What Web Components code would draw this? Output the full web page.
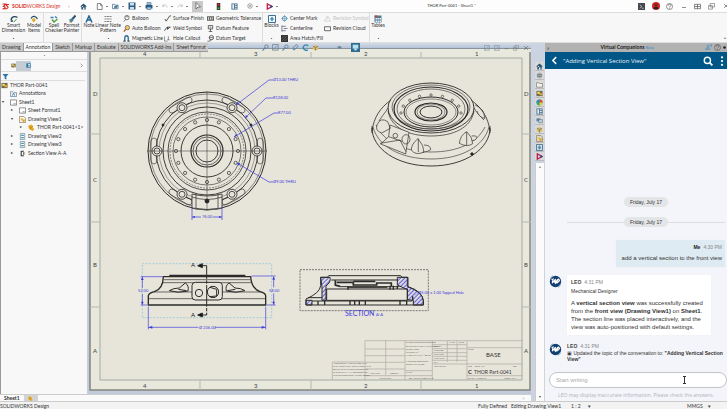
<!DOCTYPE html>
<html lang="en">
<head>
<meta charset="utf-8">
<title>THOR Part-0041 - Sheet1</title>
<style>
html,body{margin:0;height:100%}
body{font:5px/6px Lato,"Liberation Sans",sans-serif;color:#333;background:#f7f7f7;overflow:hidden}
</style>
</head>
<body>
<sw-app></sw-app>
<script>
const RESET = `:host,*{box-sizing:border-box}button{font:inherit;color:inherit;background:none;border:0;padding:0;margin:0;display:flex;align-items:center;justify-content:center}`;
function define(name, html) {
  customElements.define(name, class extends HTMLElement {
    connectedCallback() {
      if (this.shadowRoot) return;
      const root = this.attachShadow({mode: 'open'});
      const t = document.createElement('template');
      t.innerHTML = typeof html === 'function' ? html(this) : html;
      root.append(t.content.cloneNode(true));
    }
  });
}
const S = (d, c = '#666', w = 1.6) => `<path d="${d}" fill="none" stroke="${c}" stroke-width="${w}"/>`;
const F = (d, c) => `<path d="${d}" fill="${c}"/>`;
const ICONS = {
  home: F('M8 1L0 8h3v7h10V8h3z', '#2c5674') + F('M7 10h3v5H7zM5 7h2v2H5z', '#fff'),
  page: S('M3 1h7l4 4v10H3zM10 1v4h4', '#555'),
  open: S('M1 13V3h5l2 2h6v8z', '#3c6683') + F('M5 7l9-3-2 7-7 2z', '#4f7f9f'),
  save: F('M1 1h14v14H1z', '#2c5c83') + F('M4 2h8v5H4zM4 10h8v5H4z', '#cfe0ec'),
  print: F('M1 6h14v7H1z', '#2c5c83') + F('M4 1h8v5H4zM4 10h8v5H4z', '#9fc0d6') + S('M4 1h8v5H4zM4 10h8v5H4z', '#2c5c83', 1),
  undo: S('M2 4v5h5M2 9c2-6 11-5 12 3', '#bbb', 2),
  redo: S('M14 4v5H9M14 9C12 3 3 4 2 12', '#bbb', 2),
  cursor: F('M4 1l9 9H8l-4 4z', '#fff') + S('M4 1l9 9H8l-4 4z', '#333', 1.2),
  light: F('M4 0h8v16H4z', '#333') + '<circle cx="8" cy="4" r="2.4" fill="#e22"/><circle cx="8" cy="12" r="2.4" fill="#3b3"/>',
  panel: F('M1 1h14v14H1z', '#46708c') + F('M3 3h4v10H3zM9 3h4v2H9zM9 7h4v2H9zM9 11h4v2H9z', '#e6eef3'),
  gear: '<circle cx="8" cy="8" r="6" fill="none" stroke="#888" stroke-width="2"/><circle cx="8" cy="8" r="2.5" fill="#999"/>',
  play: S('M3 2v12l11-6z', '#c01f44', 3) + F('M10 4l6 4-6 4z', '#294a9c'),
  dim: S('M2 11C2 4 9 1 15 5', '#23435b', 2.6) + F('M1 14l3-5 3 4z', '#23435b') + S('M8 14l5-6', '#4c9a3d', 2),
  model: S('M2 7C5 0 12 2 15 8', '#274b66', 2.4) + F('M3 9l5-3 4 4-5 5z', '#e0ad2b'),
  spell: S('M1 5h6M10 3l4 3', '#3a7fb5', 3) + S('M4 9l4 5 7-6', '#4ea63a', 3),
  brush: S('M15 1L8 9', '#2b526f', 4) + F('M2 9l6-2 3 4-5 5z', '#4a7fa6') + S('M2 13l4 2', '#e0ad2b', 2),
  note: S('M2 15L8 2l6 13M4 10h8', '#20648f', 3),
  pattern: S('M1 3h4M6 3h4M11 3h4M1 8h4M6 8h4M11 8h4M1 13h4M6 13h4M11 13h4', '#777', 1.8),
  balloon: '<circle cx="9" cy="6" r="5" fill="none" stroke="#444" stroke-width="1.6"/>' + S('M6 10l-4 5M7 4h4', '#444'),
  auto: '<circle cx="10" cy="6" r="5" fill="#f0c96a" stroke="#444" stroke-width="1.4"/>' + S('M6 10l-4 5', '#b3541d', 3),
  magnet: S('M4 15V7c0-7 8-7 8 0v8', '#2f6c98', 3) + S('M0 14h6M10 14h6', '#333', 1.6),
  finish: S('M2 9l3 5L13 2h3', '#333', 1.8),
  weld: S('M1 13L7 5h8M8 5v5l5-5', '#333', 2),
  hole: S('M1 3v11h7M10 3v8M7 11h6', '#555', 1.4),
  geo: F('M0 3h16v10H0z', '#555') + F('M2 5h3v6H2zM7 5h3v6H7zM12 5h2v6h-2z', '#ddd'),
  datum: S('M3 1h10v8H3zM8 9v5M4 15h8M6 5h4', '#444', 1.8),
  target: '<circle cx="10" cy="6" r="5" fill="none" stroke="#444" stroke-width="1.8"/>' + S('M1 14h6l3-4M5 6h9', '#444'),
  blocks: S('M1 1h14v14H1z', '#3e6f93', 2) + F('M4 8l4-5 4 5-4 5z', '#4a92c4'),
  center: '<circle cx="8" cy="8" r="5" fill="none" stroke="#3b7eab" stroke-width="1.8"/>' + S('M8 0v16M0 8h16', '#3b7eab', 1),
  cline: S('M2 1v14M2 3h9M2 13h9M6 8h9', '#557', 1.6),
  hatch: F('M0 0h16v16H0z', '#333') + S('M2 14L14 2M2 8l6-6M8 14l6-6', '#888', 1.2),
  tri: S('M8 2l7 12H1zM8 6v4', '#c8c8c8'),
  cloud: S('M1 4h14v9H1z', '#444', 1.8),
  table: F('M1 1h14v14H1z', '#547a94') + F('M3 6h3v3H3zM7 6h3v3H7zM11 6h3v3h-3zM3 11h3v3H3zM7 11h3v3H7zM11 11h3v3h-3z', '#e9f1f6') + F('M1 1h6v3H1z', '#c9483c'),
  mag: '<circle cx="10" cy="6" r="4" fill="none" stroke="#5a7fa3" stroke-width="2"/>' + S('M7 9l-6 6', '#5a7fa3', 2.4),
  fit: S('M1 1h13v13H1zM4 12l7-8', '#6f839c', 1.8),
  slice: S('M10 1l4 4-8 8-4-4zM2 13h5', '#5a7fa3', 2),
  rot: S('M14 4C9-1 2 4 3 9s7 7 10 4', '#2b86b8', 3),
  cube: F('M2 5l6-3 6 3v7l-6 3-6-3z', '#e3ba4d') + S('M2 5l6 3 6-3M8 8v7', '#5d7690'),
  eye: F('M1 8c4-6 10-6 14 0-4 6-10 6-14 0z', '#6f879b'),
  screen: F('M0 0h16v16H0z', '#2f6e92') + F('M3 3h10v7H3z', '#b9e0ee') + F('M6 10h4v3H6z', '#e5edf2'),
  min: S('M3 12h10', '#666', 2), cross: S('M3 3l10 10M13 3L3 13', '#555', 1.8),
  rest: S('M5 1h10v8H5zM1 6h9v8H1z', '#777'),
  grid: S('M1 3h14v10H1zM8 3v10M1 8h14', '#666', 1.8),
  help: '<circle cx="8" cy="8" r="7" fill="none" stroke="#555" stroke-width="1.4"/>' + S('M5 6c0-4 6-4 6 0 0 2-3 2-3 4M8 11v2', '#555'),
  dark: F('M0 0h16v16H0z', '#454850') + S('M4 4l5 4-5 4M9 12h4', '#ddd'),
  user: '<circle cx="8" cy="8" r="8" fill="#cf2424"/>' + F('M3 14c0-6 10-6 10 0z', '#222') + '<circle cx="8" cy="6" r="3" fill="#5a2d1c"/>',
  draw: F('M1 2h14v12H1z', '#6f6a55') + F('M3 4h6v5H3z', '#f3d463') + F('M8 7h6v5H8z', '#e2a91e'),
  tree: F('M1 1h14v14H1z', '#2f79a5') + F('M7 3h6v3H7zM7 8h6v4H7z', '#dbeef8'),
  filter: F('M1 2h14l-5 6v7l-4-2V8z', '#2b76a3'),
  ann: S('M1 4h6l2 2h6v9H1z', '#57798f') + S('M5 13l3-6 3 6', '#2f6c98', 1.8),
  sheet: F('M1 2h14v12H1z', '#fff') + S('M1 2h14v12H1zM8 11h5', '#777', 1.8),
  view: S('M1 1h10l4 4v10H1z', '#8a7a45') + F('M4 5h5v5H4z', '#f0c235') + F('M8 8h5v5H8z', '#d99b1c'),
  part: F('M1 4l6-3 5 4-1 4 4 3-5 4-8-5z', '#e6aa20') + S('M1 4l5 4 6-3M6 8v5', '#a8760f', 1),
  view2: S('M3 1h10v14H3z', '#6e8697') + F('M5 4h6v3H5zM5 9h6v3H5z', '#4d93ae'),
  section: S('M5 2v12M5 3h6M5 13h6M11 5v6', '#333', 2.4),
  ball: '<circle cx="8" cy="8" r="7" fill="#3a6"/>' + F('M8 8V1a7 7 0 0 1 7 7z', '#e43') + F('M8 8H1a7 7 0 0 1 7-7z', '#38c') + F('M8 8h7a7 7 0 0 1-7 7z', '#ec3'),
  db: '<ellipse cx="8" cy="8" rx="6" ry="7" fill="#a9b0b5"/>' + S('M2 6h12M2 10h12', '#566', 1.4),
  folder: F('M1 4h5l2 2h7v8H1z', '#f5f5ee') + S('M1 4h5l2 2h7v8H1z', '#666', 1.4),
  chat: F('M1 3h9v7H1z', '#5b87a2') + F('M6 6h9v7H6z', '#b8d2e0') + S('M6 6h9v7H6z', '#456', 1),
  search: '<circle cx="7" cy="7" r="5" fill="none" stroke="#fff" stroke-width="2.2"/>' + S('M11 11l4 4', '#fff', 2.8),
  back: S('M11 2L5 8l6 6', '#fff', 2.6),
  dots: '<circle cx="8" cy="2" r="1.8" fill="#fff"/><circle cx="8" cy="8" r="1.8" fill="#fff"/><circle cx="8" cy="14" r="1.8" fill="#fff"/>',
  share: S('M2 12c0-5 8-5 8 0zM4 4h5v4M11 2h4v4', '#2687c4', 1.6),
  right: S('M5 2l6 6-6 6', '#555', 1.8), up: F('M3 11l5-6 5 6z', '#777'), down: F('M3 5l5 6 5-6z', '#444'),
  dot: '<circle cx="8" cy="8" r="7" fill="#222"/>',
  avatar: '<circle cx="8" cy="8" r="7" fill="#123f70"/>' + S('M2 4a7 7 0 0 1 3-3M14 12a7 7 0 0 1-3 3', '#8fb4cc', 1.4) + S('M3 6l2-1-1 5 4-5-1 5 4-5M8 11l4-6 1 2-3 3', '#fff', 1.3)
};
define('sw-icon', el => `<style>:host{display:inline-block;width:var(--s,7px);height:var(--s,7px);flex:none}svg{display:block;width:100%;height:100%}</style><svg viewBox="0 0 16 16" aria-hidden="true">${ICONS[el.getAttribute('name')]}</svg>`);
const ic = (n, s) => `<sw-icon name="${n}"${s ? ` style="--s:${s}px"` : ''}></sw-icon>`;
const ib = (n, label, s, extra = '') => `<button aria-label="${label}" ${extra}>${ic(n, s)}</button>`;

define('sw-titlebar', `<style>${RESET}
:host{display:flex;height:12px;align-items:center;background:#fdfdfd;padding:0 0 0 2px}
.logo{display:flex;align-items:center;gap:2px;color:#d9382f;width:78px;font:5px/6px Lato,sans-serif;white-space:nowrap}.logo b{font-weight:900}.logo svg{width:8px;height:7px}
nav,.win{display:flex;align-items:center;gap:9px}nav button{position:relative}.sel{background:#c9c9c9;height:11px;width:11px}
nav+nav{gap:5px;margin-left:8px}nav+nav :last-child{margin-left:4px}
.dd::after{content:"";position:absolute;right:-5px;width:2px;height:1px;background:#888}
.title{flex:1;text-align:center;font-size:4px;padding-right:8px}.win{gap:7px;margin-right:-2px}.win button{width:7px}</style>
<span class="logo"><svg viewBox="0 0 16 14"><path d="M1 2h6L3 7c5 0 4 5-2 5M14 3H9c-2 3 4 3 3 6-1 2-3 3-6 3" fill="none" stroke="#d9261d" stroke-width="2.4"/></svg><span><b>SOLID</b>WORKS <i>Design</i> &nbsp; &nbsp; &nbsp;›</span></span>
<nav>${ib('home','Home',7)}${ib('page','New',7,'class="dd"')}${ib('open','Open',7,'class="dd"')}${ib('save','Save',8,'class="dd"')}${ib('print','Print',8,'class="dd"')}${ib('undo','Undo',6,'class="dd"')}${ib('redo','Redo',6,'class="dd"')}${ib('cursor','Select',8,'class="sel"')}</nav><nav>${ib('light','Rebuild',7)}${ib('panel','Options',7)}${ib('gear','Settings',6,'class="dd"')}${ib('play','Run',7,'class="dd"')}</nav>
<span class="title">THOR Part-0041 - Sheet1 *</span>
<div class="win">${ib('dark','Console',7)}${ib('user','Account',8)}${ib('help','Help',7)}${ib('min','Minimize',6)}${ib('grid','Layout',7)}${ib('rest','Restore',7)}${ib('cross','Close',6)}</div>`);

define('sw-tool', el => `<style>${RESET}
:host{display:block;flex:none}
button{white-space:nowrap}
:host(:not([big])) button{height:10px;gap:2px;justify-content:flex-start}
:host([big]) button{flex-direction:column;height:29px;justify-content:flex-start;width:100%;padding-top:2px;text-align:center;line-height:5px;position:relative}
:host([disabled]) button{color:#c4c4c4}.a{position:absolute;bottom:1px}
</style><button>${ic(el.getAttribute('icon'), el.hasAttribute('big') ? 8 : 7)}<span><slot></slot></span>${el.hasAttribute('arrow') ? `<span class="a">${ic('down',3)}</span>` : ''}</button>`);
const tool = (i, t, a = '') => `<sw-tool icon="${i}" ${a}>${t}</sw-tool>`;
define('sw-ribbon', `<style>${RESET}
:host{display:flex;height:31px;background:#f7f7f7;border-top:1px solid #ddd;border-bottom:1px solid #ddd;position:relative}
.g{display:flex;border-right:1px solid #ddd;padding:0 1px;flex:none}.c{width:43px}.c.s{width:41px}.c.w{width:44px}
.x{position:absolute;right:0;bottom:1px}
</style>
<div class="g">${tool('dim','Smart<br>Dimension','big arrow style="width:25px"')}${tool('model','Model<br>Items','big style="width:16px"')}</div>
<div class="g">${tool('spell','Spell<br>Checker','big style="width:18px"')}${tool('brush','Format<br>Painter','big style="width:17px"')}</div>
<div class="g" style="border:0">${tool('note','Note','big style="width:12px"')}${tool('pattern','Linear Note<br>Pattern','big arrow style="width:26px"')}</div>
<div class="g"><div class="c s">${tool('balloon','Balloon')}${tool('auto','Auto Balloon')}${tool('magnet','Magnetic Line')}</div>
<div class="c">${tool('finish','Surface Finish')}${tool('weld','Weld Symbol')}${tool('hole','Hole Callout')}</div>
<div style="width:54px">${tool('geo','Geometric Tolerance')}${tool('datum','Datum Feature')}${tool('target','Datum Target')}</div></div>
<div class="g" style="border:0">${tool('blocks','Blocks','big arrow style="width:15px"')}</div>
<div class="g"><div class="c">${tool('center','Center Mark')}${tool('cline','Centerline')}${tool('hatch','Area Hatch/Fill')}</div>
<div class="c w">${tool('tri','Revision Symbol','disabled')}${tool('cloud','Revision Cloud')}</div></div>
<div class="g" style="border:0">${tool('table','Tables','big arrow style="width:14px"')}</div>
<span class="x">${ic('up',4)}</span>`);

define('sw-tabs', `<style>${RESET}
:host{display:flex;height:9px;background:linear-gradient(#d5dbe4,#b4c3d7 5px,#8b949b 5px,#8b949b 6px,#e8e8dc 6px)}
.t{display:flex;background:#999;gap:1px;padding-bottom:1px}
.t button{background:#c9c9c9;padding:0 2px;white-space:nowrap}.t button[aria-selected=true]{background:#fafafa}
.v{display:flex;flex:1;align-items:center;gap:3px;padding-left:54px}.r{display:flex;align-items:center;gap:4px;opacity:.8;padding-right:2px}
</style><div class="t" role="tablist">${['Drawing','Annotation','Sketch','Markup','Evaluate','SOLIDWORKS Add-Ins','Sheet Format'].map((t,i)=>`<button role="tab" aria-selected="${i===1}">${t}</button>`).join('')}</div>
<div class="v">${ib('mag','Zoom')}${ib('fit','Fit')}${ib('mag','Zoom area')}${ib('slice','Section')}${ib('rot','Rotate')}${ib('cube','Display')}<span style="width:12px"></span>${ib('eye','Hide',5)}<span style="width:3px"></span>${ib('screen','View',9)}</div>
<div class="r">${ib('fit','Pane',6)}${ib('fit','Pane',6)}${ib('min','Minimize',5)}${ib('rest','Restore',6)}${ib('cross','Close',6)}</div>`);

const ITEMS = [[0,'','draw','THOR Part-0041'],[9,'','ann','Annotations'],[9,'▾','sheet','Sheet1'],[18,'▸','sheet','Sheet Format1'],[18,'▾','view','Drawing View1'],[27,'▸','part','THOR Part-0041&lt;1&gt;'],[18,'▸','view2','Drawing View2'],[18,'▸','view2','Drawing View3'],[18,'▸','section','Section View A-A']];
define('sw-tree', `<style>${RESET}
:host{display:block;width:88px;flex:none;background:#f8f8f9;border-left:1px solid #999;border-right:1px solid #ccd;overflow:hidden}
.grip{height:8px;border-bottom:1px solid #ddd;display:flex;justify-content:center;padding-top:2px}
.tabs{display:flex;height:12px;align-items:center;border-bottom:1px solid #ddd;padding-right:3px}.tabs button{width:15px;height:10px}.tabs .on{background:#c6ccd4}.tabs :last-child{margin-left:auto;width:5px}
.f{height:9px;display:flex;align-items:center;padding-left:1px;margin-right:2px;border-bottom:1px solid #ddd}
ul{list-style:none;margin:0;padding:0}li{display:flex;align-items:center;height:8px;gap:2px;white-space:nowrap;line-height:8px}li:nth-child(2n){margin-bottom:1px}
.e{width:3px;margin-left:-8px;margin-right:3px;font-size:4px;line-height:8px}
</style><div class="grip">${ic('up',3)}</div><div class="tabs">${ib('draw','Features')}${ib('tree','Properties',7,'class="on"')}${ib('right','More',5)}</div><div class="f">${ic('filter')}</div>
<ul>${ITEMS.map(i=>`<li style="padding-left:${i[0]}px">${i[1]?`<span class="e">${i[1]}</span>`:''}${ic(i[2],7)}<span>${i[3]}</span></li>`).join('')}</ul>`);

/* Plan view of the base: concentric rings, bolt circle and six lugs. */
function planView() {
  const cx = 207, cy = 151, c = (x, y, r, w = .7, e = '') => `<circle cx="${x}" cy="${y}" r="${r}" stroke-width="${w}" ${e}/>`;
  let s = c(cx,cy,59,1) + c(cx,cy,57,.5);
  for (let i = 0; i < 6; i++) {
    s += `<g transform="rotate(${i*60} ${cx} ${cy})"><path d="M260 138q3 0 3 4v18q0 4-3 4-3 0-3-4v-4M257 146v-4q0-4 3-4" stroke-width=".6"/></g>`;
  }
  s += c(cx,cy,51,.9) + c(cx,cy,48,.4) + c(cx,cy,44,.9) + c(cx,cy,39,.8) + c(cx,cy,37,.5,'stroke-dasharray="2 1"') + c(cx,cy,34,.6) + c(cx,cy,26,.9) + c(cx,cy,16,1.2) + c(cx,cy,14,.7) + c(cx,cy,11,.9);
  for (let i = 0; i < 16; i++) { const a = i*Math.PI/8; s += c(cx+31*Math.cos(a), cy+31*Math.sin(a), 1.6, .7); }
  for (let i = 0; i < 6; i++) { const a = i*Math.PI/3, x = cx+50*Math.cos(a), y = cy+50*Math.sin(a); s += c(x,y,5,.8,'fill="#e7e4da"') + c(x,y,3,.8); }
  s += `<path d="M192 194q15 4 30 0v14q-15 3-30 0z" fill="#e7e4da" stroke-width=".8"/><path d="M196 194v14M218 194v14M192 197q15 5 30 0" stroke-width=".7"/><circle cx="207" cy="201" r="2" fill="#222"/><path d="M147 151h120M207 92v118" stroke-width=".5"/><circle cx="163" cy="125" r="1" fill="#222"/><circle cx="251" cy="125" r="1" fill="#222"/>`;
  return s;
}
/* Isometric view: stacked ellipses over the flared skirt. */
function isoView() {
  const e = (cy, rx, ry, w = .7, x = '') => `<ellipse cx="431" cy="${cy}" rx="${rx}" ry="${ry}" stroke-width="${w}" ${x}/>`;
  let s = `<path d="M372 128c0 20 24 38 59 38s59-18 59-38" stroke-width=".9"/><path d="M372 131c2-14 8-23 19-31M490 131c-2-14-8-23-19-31M372 126v7M490 126v7" stroke-width=".8"/><path d="M373 127c5 19 27 32 58 32s53-13 58-32M376 125c7 16 28 27 55 27s46-9 54-25" stroke-width=".6"/>`;
  s += e(108,43,25,.9,'fill="#e7e4da"') + e(107,39,22,.6) + e(109,37,22,1.2) + e(109,34,20,.6) + e(112,27,15,1) + e(112,25,13,.5) + e(112,16,9,1.2) + e(112,14,8,.5) + e(112,11,6,1);
  s += `<path d="M388 111c3 17 21 25 43 25s40-8 43-25M388 108c-3 5-6 8-9 13M474 108c3 5 6 8 10 12" stroke-width=".7"/>`;
  for (let i = 0; i <= 8; i++) { const a = i*Math.PI/8; s += `<circle cx="${431+30*Math.cos(a)}" cy="${113-18*Math.sin(a)}" r="1.2" stroke-width=".6"/>`; }
  s += `<g transform="translate(355 70) scale(.333333)" stroke-width="2"><path d="M105 165l57 22-10 65-75-30 24-22zM75 220l60-10 18 35M101 200l40 14M66 165q10-25 32-10l8 20-26 14q-20-6-14-24z" fill="#e7e4da"/><circle cx="121" cy="197" r="7"/><ellipse cx="153" cy="208" rx="12" ry="14"/><path d="M169 240q0-18 20-34 18 20 18 40-25 12-38-6zM207 225q20 0 20 14-8 6-24 8M190 206v40M313 220q3-25 22-35 18 16 18 36-16 12-40-1zM350 198q16-2 16 6-6 8-14 8M335 186v40M360 105q25 8 30 40-18-2-24-22M366 105l20 22" fill="#e7e4da"/><circle cx="351" cy="252" r="4" fill="#222"/></g>`;
  return s;
}
const T = (x, y, s, t, e = '') => `<text x="${x}" y="${y}" font-size="${s}" ${e}>${t}</text>`;
define('sw-drawing', () => {
  let zones = '';
  [['D',96],['C',182],['B',267],['A',353]].forEach(([l,y]) => zones += T(93,y,6,l) + T(524,y,6,l));
  [['4',143],['3',254],['2',364],['1',475]].forEach(([l,x]) => zones += T(x,388,6,l) + T(x,56,6,l));
  return `<style>:host{display:block;flex:1;min-width:0;background:#c1cadb;overflow:hidden}svg{display:block;width:100%;height:100%}text{font-family:Lato,"Liberation Sans",sans-serif}.k{fill:none;stroke:#2a2a28}.b{fill:none;stroke:#3c3cdc;stroke-width:.7}.bt{fill:#3c3cdc}.g{fill:#5d5c58}.af{fill:#3c3cdc;stroke:none}</style>
<svg viewBox="88 52 443 342" preserveAspectRatio="xMinYMin meet" role="img" aria-label="Drawing sheet of THOR Part-0041">
<defs><pattern id="h" width="9" height="9" patternUnits="userSpaceOnUse" patternTransform="rotate(45)"><path d="M4 0v9" stroke="#4a4ae0" stroke-width="3"/></pattern></defs>
<path d="M90 52h441v338H90z" fill="#e8e8dc"/><path d="M100 58h422v322H100z" fill="#e7e4da" stroke="#a5aaa4"/><path d="M90 52v338h440V52" fill="none" stroke="#85857e" stroke-width="1.5"/>
<path d="M90 134h10M90 222h10M90 307h10M522 134h9M522 222h9M522 307h9M200 380v10M311 380v10M421 380v10M200 52v6M311 52v6M421 52v6" stroke="#b5b9b0"/>
<g fill="#444">${zones}</g>
<g class="k">${planView()}${isoView()}</g>
<g class="b"><path d="M236 105l33-25h4M245 118l21-20h7M234 137l40-24h4M237 163l32 19h4M192 207v13M222 207v13M192 217h9M213 217h9"/><path class="af" d="M236 105l1-3 2 2zM245 118l1-3 2 2zM234 137l2-3 1 2zM237 163l3 0-1 3zM192 217l3-1v2zM222 217l-3-1v2z"/></g>
<g class="bt">${T(273,81,4,'Ø13.00 THRU')}${T(273,99,4,'R128.00')}${T(278,114,4,'R77.00')}${T(273,183,4,'Ø9.00 THRU')}${T(202,218,4,'76.00')}</g>
<g transform="translate(130 250) scale(.333333)">
<path d="M37 41h388v162H37z" fill="none" stroke="#83c4d6" stroke-width="2" stroke-dasharray="6 4"/>
<g class="k" stroke-width="3"><path d="M55 165v-28q2-8 18-12 26-8 27-45h262q2 34 28 45 16 4 17 12v28z" stroke-width="4"/><path d="M118 77h228" stroke-width="5"/><path d="M101 89h260M99 98h264M72 126h320M55 146h352" stroke-width="2"/><path d="M118 122q12-8 30-8l18-15q12 8 8 24-30 8-56-1zM345 122q-12-8-30-8l-18-15q-12 8-8 24 30 8 56-1zM145 118l24 4M316 118l-24 4"/><rect x="186" y="97" width="91" height="53" rx="10" fill="#e7e4da"/><circle cx="207" cy="129" r="11"/><circle cx="249" cy="126" r="17"/><path d="M240 112l20 6v20l-22 2"/><path d="M205 47h25v148h-25" stroke-width="3" stroke-dasharray="25 0 40 4 10 4"/><path d="M203 47l14-6v12zM203 195l14-6v12z" fill="#111"/></g>
<g class="b" style="stroke-width:2"><path d="M32 80h66M32 165h20M37 82v32M37 132v32M365 78h72M410 165h27M431 80v32M431 130v34M55 170v68M407 170v68M55 232h150M255 232h152"/><path class="af" d="M37 80l4 10h-8zM37 165l4-10h-8zM431 79l4 10h-8zM431 165l4-10h-8zM55 232l12-4v8zM407 232l-12-4v8z"/></g></g>
<g class="bt">${T(138,292,4,'52.00')}${T(269,292,4,'58.00')}${T(199,329,4,'Ø 236.00')}</g>
<g fill="#111">${T(191,267,6,'A')}${T(191,317,6,'A')}</g>
<g transform="translate(290 255) scale(.333333)">
<path d="M30 44h385v123H30z" fill="none" stroke="#777" stroke-width="3" stroke-dasharray="6 3"/>
<g class="k" stroke-width="3"><path d="M48 150v-18q42-18 44-40V67h20l4-5h216l4 5h16v28q46 16 48 42v13z"/><path d="M92 67h28q4 14-12 26v43H96V96zM322 67h32v28q44 14 46 42v13h-30V136l-18-2v-30l-30-14zM48 136h18v14H48z" fill="url(#h)"/><path d="M124 75h200M110 102h242v34H110zM66 138h300M54 128h42M172 97h120M150 95h178"/><path d="M136 76v14l14 4M140 82h50v8h70v-6h44v10M190 79h66" stroke-width="5"/><path d="M174 94v10M300 92v12M310 92v12M322 92v10M84 138v12M104 138v12M180 138v12M194 138v12M208 138v12M226 138v12M330 138v12M350 138v12M368 124v12" stroke-width="4"/></g><path class="b" d="M372 122l14-10" stroke-width="2"/></g>
<g class="bt">${T(418,294,4,'Ø5.00 x 1.00 Tapped Hole')}${T(345,316,7,'SECTION')}${T(376,316,4,'A-A')}</g>
<g transform="translate(325 330) scale(.333333)" fill="none" stroke="#aaa79f" stroke-width="2"><path d="M592 32H120v118M22 150V96h97M182 32v102M240 32v118M322 32v118M426 32v118M120 57h120M120 77h120M120 97h120M120 117h120M120 137h202M240 122h82M322 44h104M322 56h104M322 68h104M322 79h104M322 91h104M322 102h270M367 32v64M396 32v64M426 53h166M426 137h166"/></g>
<g class="g">${T(334,364,2,'PROPRIETARY AND CONFIDENTIAL')}${T(333,367,2,'THE INFORMATION CONTAINED IN THIS')}${T(333,370,2,'DRAWING IS THE SOLE PROPERTY OF')}${T(333,373,2,'THE COMPANY. ANY REPRODUCTION')}${T(333,376,2,'WITHOUT PERMISSION IS PROHIBITED.')}
${T(370,374,2,'NEXT ASSY')}${T(390,374,2,'USED ON')}${T(379,379,2,'APPLICATION')}${T(406,343,2,'UNLESS OTHERWISE SPECIFIED:')}${T(406,347,2,'DIMENSIONS ARE IN MILLIMETERS')}${T(406,350,2,'TOLERANCES:')}${T(406,353,2,'FRACTIONAL ±')}${T(406,356,2,'ANGULAR: MACH ± BEND ±')}${T(406,362,2,'INTERPRET GEOMETRIC')}${T(406,365,2,'TOLERANCING PER:')}${T(406,373,2,'FINISH')}${T(409,379,2,'DO NOT SCALE DRAWING')}
${T(449,343,2,'NAME')}${T(459,343,2,'DATE')}${T(434,347,2,'DRAWN')}${T(434,351,2,'CHECKED')}${T(434,355,2,'ENG APPR.')}${T(434,359,2,'MFG APPR.')}${T(434,363,2,'Q.A.')}${T(434,367,2,'COMMENTS:')}${T(468,350,2,'TITLE:')}${T(468,367,2,'SIZE')}${T(475,367,2,'DWG. NO.')}${T(513,367,2,'REV')}${T(468,379,2,'SCALE: 1:2  WEIGHT:')}${T(504,379,2,'SHEET 1 OF 1')}</g>
<g fill="#333">${T(486,357,6,'BASE')}${T(468,374,6,'C','font-weight="700"')}${T(474,374,5,'THOR Part-0041')}</g>
</svg>`;
});

define('sw-taskpane', `<style>${RESET}
:host{display:flex;flex-direction:column;width:13px;flex:none;background:#ccd3e0;padding:19px 0 0 4px}
button{width:9px;height:9px;background:#d9d9d9;border-bottom:1px solid #bbb}.s{flex:1;background:#fbfbfb;margin-top:2px;display:flex;flex-direction:column;justify-content:space-between;align-items:center;border-left:1px solid #ccc;padding:2px 0}
</style>${['home','db','folder','draw','ball','panel','chat','cube','view','blocks','play'].map(n=>ib(n,n,7)).join('')}<div class="s">${ic('up',4)}${ic('down',4)}</div>`);

define('sw-sheetbar', `<style>${RESET}
:host{display:flex;height:7px;background:#fafafa;border-top:1px solid #ccc;padding-left:4px;align-items:center}button{font-weight:700;line-height:6px;margin-right:4px}.n{background:#d3d3d3;width:14px;height:6px}.x{margin-left:auto;margin-right:6px}
</style><button>Sheet1</button>${ib('part','Add sheet',5,'class="n"')}<span class="x">${ic('right',3)}</span>`);
define('sw-status', `<style>${RESET}
:host{display:flex;height:8px;background:#f3f3f3;border-top:1px solid #ccc;line-height:8px;white-space:nowrap;align-items:center}
.l{flex:1}.r{width:249px;display:flex}.r span{flex:none}.r span:nth-child(1){width:33px}.r span:nth-child(2){width:60px}.r span:nth-child(3){width:116px}
</style><span class="l">SOLIDWORKS Design</span><div class="r"><span>Fully Defined</span><span>Editing Drawing View1</span><span>1 : 2 &nbsp; &nbsp; &nbsp;▾</span><span>MMGS &nbsp; &nbsp;▾</span></div>`);

define('chat-message', el => `<style>:host,*{box-sizing:border-box}
:host{display:flex;gap:5px;align-items:flex-start;font:6px/8px "Liberation Sans",sans-serif;color:#333}
.b{background:#fff;padding:3px 4px 4px;width:144px;box-shadow:0 0 1px #e3e3e8}.h{font-size:5px;line-height:8px;color:#888}.h b{color:#444;margin-right:3px}
.role{font-size:5px;line-height:10px;margin-bottom:3px}
:host([mine]){justify-content:flex-end}:host([mine]) .b{background:#dfebf3;width:109px;text-align:right;padding:3px 3px 5px;white-space:nowrap}:host([mine]) .h{margin-bottom:3px}:host([mine]) .h b{color:#222}
:host([plain]) .b{background:none;box-shadow:none;padding:0;width:156px;font-size:5px;line-height:6px}:host([plain]) .h{line-height:7px}
</style>${el.hasAttribute('mine') ? '' : ic('avatar',13)}<div class="b"><div class="h"><b>${el.getAttribute('from')}</b>${el.getAttribute('time')}</div>${el.getAttribute('role-name') ? `<div class="role">${el.getAttribute('role-name')}</div>` : ''}<slot></slot></div>`);
define('chat-day', `<style>:host{display:flex;justify-content:center;font:5px/10px "Liberation Sans",sans-serif}
:host([line]){background:linear-gradient(#dcdde3,#dcdde3) center/100% 1px no-repeat}span{background:#e4e5e6;border-radius:5px;width:44px;text-align:center}</style><span><slot></slot></span>`);
define('chat-companion', `<style>${RESET}
:host{display:flex;flex-direction:column;width:25%;min-width:183px;flex:none;background:#f4f5fa;border-left:1px solid #cfd3da}
.top{height:9px;background:#b2b2b2;display:flex;align-items:center;padding:0 1px 0 2px;gap:2px}.top .t{flex:1;text-align:center;font-weight:700;font-size:5px;line-height:8px;color:#222}.t span{color:#2a8bd0;font-size:4px;font-weight:400}
.head{height:17px;background:#005686;color:#e8f3fa;display:flex;align-items:center;padding:0 0 0 4px;gap:4px;font:6px/8px "Open Sans",Lato,sans-serif}.head .t{flex:1}.head button{width:10px}
.log{flex:1;display:flex;flex-direction:column;justify-content:flex-end;padding:0 2px 10px 4px;min-height:0}
chat-day{margin:0 0 10px 18px}chat-day[line]{margin-bottom:13px}chat-message{margin-bottom:8px}chat-message:last-child{margin:0}
.bar{margin:0 0 0 4px;position:relative}.bar input{display:block;width:100%;height:16px;border:1px solid #c3c5ca;border-radius:8px;background:#fff;padding:0 6px;font:6px/8px "Liberation Sans",sans-serif;outline:0}.bar input::placeholder{color:#aaa;opacity:1}
.bar svg{position:absolute;right:40px;top:4px;width:5px;height:8px}
.n{font:5px/6px "Open Sans",sans-serif;color:#b0b2b8;text-align:center;padding:4px 0 3px;white-space:nowrap}
</style>
<div class="top"><span>»</span><span class="t">Virtual Companions <span>Beta</span></span>${ic('share')}${ic('help')}${ic('dot',3)}</div>
<div class="head">${ib('back','Back',9)}<span class="t">"Adding Vertical Section View"</span>${ib('search','Search',10)}${ib('dots','More',10)}</div>
<div class="log"><chat-day>Friday, July 17</chat-day><chat-day line>Friday, July 17</chat-day>
<chat-message mine from="Me" time="4:30 PM">add a vertical section to the front view</chat-message>
<chat-message from="LEO" time="4:31 PM" role-name="Mechanical Designer">A <b>vertical section view</b> was successfully created from the <b>front view (Drawing View1)</b> on <b>Sheet1</b>. The section line was placed interactively, and the view was auto-positioned with default settings.</chat-message>
<chat-message plain from="LEO" time="4:31 PM">▣ Updated the topic of the conversation to: <b>"Adding Vertical Section View"</b></chat-message></div>
<div class="bar"><input aria-label="Message" placeholder="Start writing"><svg viewBox="0 0 10 16"><path d="M2 1h6M5 1v14M2 15h6" stroke="#333" stroke-width="2"/></svg></div>
<div class="n">LEO may display inaccurate information. Please check the answers.</div>`);

define('sw-app', `<style>:host{display:flex;flex-direction:column;height:100vh}.m{flex:1;display:flex;min-height:0}.w{flex:1;min-width:0;display:flex;flex-direction:column}.d{flex:1;display:flex;min-height:0}</style>
<sw-titlebar></sw-titlebar><sw-ribbon></sw-ribbon>
<div class="m"><div class="w"><sw-tabs></sw-tabs><div class="d"><sw-tree></sw-tree><sw-drawing></sw-drawing></div><sw-sheetbar></sw-sheetbar></div><sw-taskpane></sw-taskpane><chat-companion></chat-companion></div>
<sw-status></sw-status>`);
</script>
</body>
</html>
